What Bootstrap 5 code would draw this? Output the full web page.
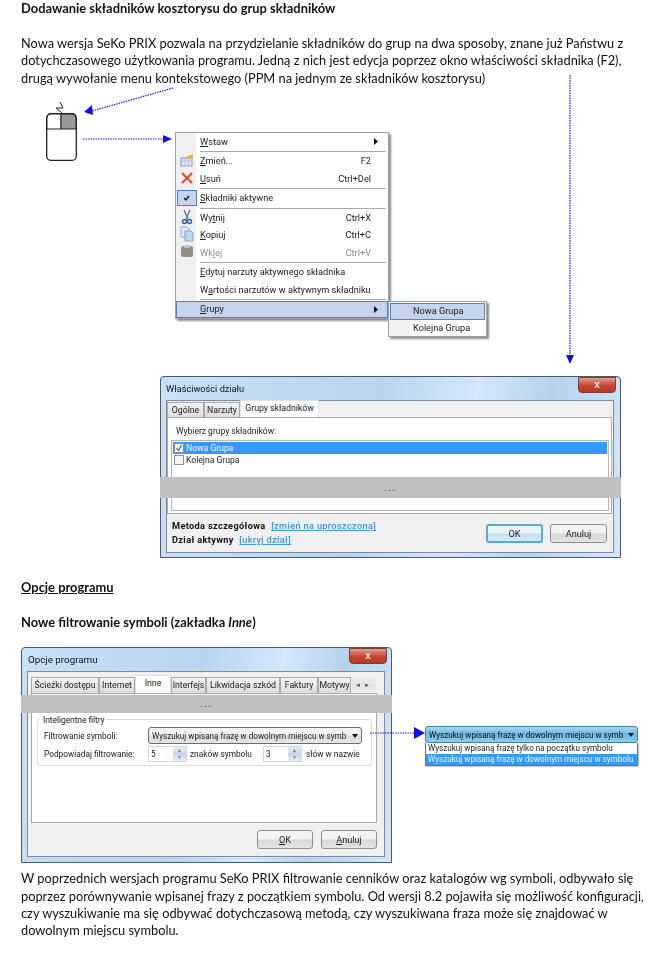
<!DOCTYPE html>
<html lang="pl"><head><meta charset="utf-8"><title>SeKo PRIX</title>
<link href="https://cdn.jsdelivr.net/npm/bootstrap@5.3.0/dist/css/bootstrap.min.css" rel="stylesheet">
<style>
html,body{margin:0;background:#fff}
.sheet{position:relative;width:668px;height:960px;overflow:hidden;padding-left:21px;font-family:Lato,"Liberation Sans",sans-serif;font-size:12.8px;line-height:17.4px;color:#111;filter:blur(.3px)}
.sheet p,.sheet h2{margin:0}
.hd{font-size:12.9px;font-weight:700;line-height:17px;color:#111}
.para-a{margin-top:18px!important;width:620px}
.para-b{margin-top:7px!important;width:640px}
.arrows{position:absolute;left:0;top:0;pointer-events:none}
.ui{font-family:Roboto,"Liberation Sans",sans-serif;font-size:9.2px;line-height:12px;color:#222;white-space:nowrap}
.fig-a{margin-left:25px;padding-top:26px;height:289px;gap:98px}
.mouse{width:31px;height:48px;flex:none;display:block}
.ctx{position:relative;width:214px;height:187px;margin-top:19px;flex:none;background:linear-gradient(90deg,#f0f0f0 20px,#fff 20px);border:1px solid #a0a0a0;box-shadow:2px 2px 2px #8a8a8a}
.mi{height:17.5px;padding-left:24px;padding-right:17px}
.mi u{text-decoration-thickness:1px;text-underline-offset:1px}
.mi.off{color:#8d8d8d}
.mi.cur{background:#c5d3ee;outline:1px solid #4f82c8;outline-offset:-1px}
.ar{margin-left:auto;margin-right:-7px}
.mic{position:absolute;left:3px;width:16px;height:16px}
.sepl{height:1px;background:#a8a8a8;margin:.5px 2px .5px 24px}
.sub{position:absolute;left:212px;top:168px;width:99px;height:36px;background:linear-gradient(90deg,#f0f0f0 21px,#fff 21px);border:1px solid #a0a0a0;box-shadow:2px 2px 2px #8a8a8a;padding:1px}
.sub .mi{padding-left:23px;height:16.5px}
.tick{position:absolute;left:1px;top:57px;width:20px;height:16px;background:#c5d3ee;border:1px solid #4f82c8}
.win{position:relative;flex:none;background:linear-gradient(100deg,#c9e0f7 0,#b7d5f1 45%,#d4e7fb 65%,#b5d3ee 80%,#d3e7fc 100%);border:1px solid #4c5a66;border-radius:4px 4px 0 0;padding:0 6px 5px 5px}
.w1{margin-left:139px;width:461px;height:182px}
.w2{width:371px;height:216px;font-size:8.3px}
.tbar{height:23px;color:#111}
.w2 .tbar{font-size:9.8px;padding-left:1px}
.xbtn{position:absolute;right:4px;top:0;width:38px;height:16px;border-radius:0 0 4px 4px;background:linear-gradient(180deg,#e0a193,#c9422f 55%,#b13a2c);border:1px solid #7f3a33;color:#f2f2f2;font:700 10px/13px "Liberation Sans",sans-serif;text-align:center}
.client{background:#f0f0f0;border:1px solid #7f8d9b}
.w1 .client{height:153px;padding:0 1px 0 0}
.w2 .client{height:186px;padding:4px 7px 0 3px}
.tabsx{border:0;flex-wrap:nowrap;height:16px;gap:0}
.w2 .tabsx{height:17px}
.tabsx .nav-link{height:15px;margin-top:1px;padding:0;text-align:center;font-size:8.7px;line-height:14px;color:#222;background:linear-gradient(#f4f4f4,#dcdcdc);border:1px solid #a9a9a9;border-bottom:0;border-radius:0;white-space:nowrap}
.w2 .tabsx .nav-link{height:16px;line-height:15px}
.tabsx .nav-link.active{height:17px;margin-top:-1px;background:#fff;color:#222;position:relative;z-index:1}
.w2 .tabsx .nav-link.active{height:18px;margin-top:-1px}
.pane{background:#fff;border:1px solid #a9a9a9}
.w1 .pane{height:97px;padding:7px 2px 0 3px;font-size:8.5px}
.w2 .pane{height:130px;padding:25px 4px 0 5px}
.lbl-a{padding-left:5px;margin-bottom:3px!important}
.lst{border:1px solid #b5b5b5;height:71px;border-radius:0;overflow:hidden;padding:1px}
.lst .list-group-item{border:0;padding:0;background:transparent;color:#222;font-size:8.6px;line-height:12px;height:12px;border-radius:0}
.lst .list-group-item.active{background:#3399ff;color:#e9f3ff}
.cb{display:inline-block;width:10px;height:10px;border:1px solid #8e8f8f;background:#f3f3f3;margin:0 2px 0 1px;vertical-align:-2px;position:relative}
.cb svg{position:absolute;left:0;top:0}
.band{position:absolute;left:-1px;right:-1px;background:#c0c0c0;text-align:center;color:#444;font:700 8px/10px "Liberation Sans",sans-serif;letter-spacing:2px}
.w1 .band{top:100px;height:21px;padding-top:7px}
.w2 .band{top:47px;height:18px;padding-top:5px}
.foot-a{height:37px;padding:5px 5px 0 5px}
.b-txt{font-weight:700;letter-spacing:.35px;color:#111;line-height:14px;font-size:9.2px}
.b-txt span{color:#3a94e8;margin-left:3px;font-weight:500;text-decoration:underline}
.btn-box{gap:7px;padding-top:5px}
.bt{width:57px;height:19px;padding:0;font:9.2px/17px Roboto,"Liberation Sans",sans-serif;color:#222;background:linear-gradient(#f3f3f3 48%,#d8d8d8 52%,#e4e4e4);border:1px solid #8d8d8d;border-radius:3px}
.bt.def{background:linear-gradient(#eaf6fb 48%,#c7e2ef 52%,#d4ebf5);border:2px solid #58a9d3;line-height:15px}
.grp{position:relative;height:47px;border:1px solid #dcdcdc;border-radius:3px;padding:7px 5px 0 6px}
.grp .lgd{position:absolute;left:4px;top:-6px;background:#fff;padding:0 1px}
.rw{height:17px;margin-bottom:1px}
.lb{width:104px;flex:none}
.cmb{height:17px;padding:0 3px 0 3px;font-size:8.15px;border:1px solid #6b6b6b;border-radius:3px;background:linear-gradient(#f3f3f3 48%,#dcdcdc 52%,#e5e5e5);width:214px;flex:none}
.caret-d{width:0;height:0;border:3.5px solid transparent;border-top:4px solid #111;border-bottom:0;flex:none;margin-left:auto}
.spin{width:39px;height:16px;flex:none;border:1px solid #d4d4d4;padding-left:2px}
.spin .sb{margin-left:auto;width:13px;height:14px;background:linear-gradient(#e8f0f8,#c4d6e8 50%,#e8f0f8);color:#6a7f95;font-size:5px;line-height:7px;text-align:center}
.sp-t{width:76px;padding-left:3px;flex:none}
.zb{width:24px;height:13px;font-size:6px;line-height:13px;background:#e6e6e6;color:#456;letter-spacing:3px;flex:none;text-align:center;margin-top:2px;margin-left:1px}
.foot-b{padding:7px 0 0 0;gap:8px}
.foot-b .bt{width:56px}
.w2-row{margin-top:16px;height:216px}
.rt{position:absolute;left:404px;top:79px;width:213px;font-size:8.15px}
.rt .cmb{background:linear-gradient(#a9d8f1,#6ab8e3 50%,#8ecdf0);border-color:#3b7ea6;height:17px;width:213px;color:#111}
.drop{border:1px solid #707070;border-top:0;background:#fff;height:23px;box-shadow:1px 1px 1px #ccc;padding-left:2px}
.drop div{height:11px;line-height:11px}
.drop .sel{background:#3399ff;color:#eaf4ff;margin-left:-2px;padding-left:2px}
.sec{margin-top:21px!important;text-decoration:underline}
.sec2{margin-top:18px!important}
</style></head><body>
<div class="sheet">
<h2 class="hd">Dodawanie składników kosztorysu do grup składników</h2>
<p class="para-a">Nowa wersja SeKo PRIX pozwala na przydzielanie składników do grup na dwa sposoby, znane już Państwu z dotychczasowego użytkowania programu. Jedną z nich jest edycja poprzez okno właściwości składnika (F2), drugą wywołanie menu kontekstowego (PPM na jednym ze składników kosztorysu)</p>

<div class="fig-a d-flex align-items-start ui">
 <svg class="mouse" viewBox="0 0 31 48"><rect x=".7" y=".7" width="29.6" height="46.6" rx="4" fill="#fff" stroke="#222" stroke-width="1.3"/><path d="M1 5a4 4 0 0 1 4-4h10v15H1z" fill="#fff" stroke="#222" stroke-width="1"/><path d="M15 1h11a4 4 0 0 1 4 4v11H15z" fill="#999" stroke="#222" stroke-width="1"/></svg>
 <div class="ctx">
  <div class="mi d-flex justify-content-between align-items-center"><span><u>W</u>staw</span><svg width="4" height="7" viewBox="0 0 4 7" class="ar"><path d="M0 0l4 3.5L0 7z" fill="#111"/></svg></div>
  <div class="sepl"></div>
  <div class="mi d-flex justify-content-between align-items-center"><span><u>Z</u>mień...</span><span>F2</span></div>
  <svg class="mic" style="top:19px" viewBox="0 0 16 16"><rect x="2" y="6" width="11" height="8" fill="#dfe7f2" stroke="#8c9bb0"/><path d="M2 9h11M6 6v8M9.500 6v8" stroke="#a9b6c8" stroke-width=".7"/><path d="M6 5l8-3v4H6z" fill="#e8b93c"/></svg>
  <div class="mi d-flex justify-content-between align-items-center"><span><u>U</u>suń</span><span>Ctrl+Del</span></div>
  <svg class="mic" style="top:37px" viewBox="0 0 16 16"><path d="M3 3l10 10M13 3L3 13" stroke="#e0492f" stroke-width="2.2"/></svg>
  <div class="sepl"></div>
  <div class="tick"><svg class="d-block" width="18" height="14" viewBox="0 0 18 14"><path d="M6 7l2 2 3-4" fill="none" stroke="#111" stroke-width="1.3"/></svg></div>
  <div class="mi d-flex align-items-center"><span><u>S</u>kładniki aktywne</span></div>
  <div class="sepl"></div>
  <div class="mi d-flex justify-content-between align-items-center"><span>Wy<u>t</u>nij</span><span>Ctrl+X</span></div>
  <svg class="mic" style="top:76px" viewBox="0 0 16 16"><path d="M5 1l4 9M11 1L7 10" stroke="#6f7f92" stroke-width="1.5"/><circle cx="5.500" cy="12.500" r="2" fill="none" stroke="#2d5fa8" stroke-width="1.4"/><circle cx="10.500" cy="12.500" r="2" fill="none" stroke="#2d5fa8" stroke-width="1.4"/></svg>
  <div class="mi d-flex justify-content-between align-items-center"><span><u>K</u>opiuj</span><span>Ctrl+C</span></div>
  <svg class="mic" style="top:93px" viewBox="0 0 16 16"><path d="M2 1h6l2 2v8H2z" fill="#e6eef8" stroke="#92abca"/><path d="M6 5h6l2 2v8H6z" fill="#bcd4ee" stroke="#7fa2cc"/></svg>
  <div class="mi off d-flex justify-content-between align-items-center"><span>Wk<u>l</u>ej</span><span>Ctrl+V</span></div>
  <svg class="mic" style="top:110px" viewBox="0 0 16 16"><rect x="2" y="3" width="12" height="11" rx="2" fill="#8f8f8f"/><rect x="5" y="2" width="6" height="3" rx="1" fill="#c5c5c5"/></svg>
  <div class="sepl"></div>
  <div class="mi d-flex align-items-center"><span><u>E</u>dytuj narzuty aktywnego składnika</span></div>
  <div class="mi d-flex align-items-center"><span>W<u>a</u>rtości narzutów w aktywnym składniku</span></div>
  <div class="sepl"></div>
  <div class="mi cur d-flex justify-content-between align-items-center"><span><u>G</u>rupy</span><svg width="4" height="7" viewBox="0 0 4 7" class="ar"><path d="M0 0l4 3.5L0 7z" fill="#111"/></svg></div>
  <div class="sub"><div class="mi cur d-flex align-items-center"><span>Nowa Grupa</span></div><div class="mi d-flex align-items-center"><span>Kolejna Grupa</span></div></div>
 </div>
</div>

<div class="win w1 ui">
 <div class="tbar d-flex align-items-center">Właściwości działu</div>
 <div class="xbtn">x</div>
 <div class="client">
  <ul class="nav nav-tabs tabsx">
   <li class="nav-item"><a class="nav-link" style="width:37px">Ogólne</a></li>
   <li class="nav-item"><a class="nav-link" style="width:36px">Narzuty</a></li>
   <li class="nav-item"><a class="nav-link active" style="width:79px">Grupy składników</a></li>
  </ul>
  <div class="pane">
   <p class="lbl-a">Wybierz grupy składników:</p>
   <ul class="list-group lst">
    <li class="list-group-item active"><span class="cb"><svg width="8" height="8" viewBox="0 0 8 8"><path d="M1.500 4l2 2.500L6.500 1" fill="none" stroke="#4a6a9a" stroke-width="1.2"/></svg></span>Nowa Grupa</li>
    <li class="list-group-item"><span class="cb"></span>Kolejna Grupa</li>
   </ul>
  </div>
  <div class="foot-a d-flex justify-content-between">
   <div class="b-txt"><div>Metoda szczegółowa <span>[zmień na uproszczoną]</span></div><div>Dział aktywny <span>[ukryj dział]</span></div></div>
   <div class="d-flex btn-box"><button class="btn bt def">OK</button><button class="btn bt">Anuluj</button></div>
  </div>
 </div>
 <div class="band">...</div>
</div>

<h2 class="hd sec">Opcje programu</h2>
<h2 class="hd sec2">Nowe filtrowanie symboli (zakładka <em>Inne</em>)</h2>

<div class="w2-row position-relative ui">
 <div class="win w2">
  <div class="tbar d-flex align-items-center">Opcje programu</div>
  <div class="xbtn">x</div>
  <div class="client">
   <ul class="nav nav-tabs tabsx">
    <li class="nav-item"><a class="nav-link" style="width:68px">Ścieżki dostępu</a></li>
    <li class="nav-item"><a class="nav-link" style="width:36px">Internet</a></li>
    <li class="nav-item"><a class="nav-link active" style="width:36px">Inne</a></li>
    <li class="nav-item"><a class="nav-link" style="width:35px">Interfejs</a></li>
    <li class="nav-item"><a class="nav-link" style="width:74px">Likwidacja szkód</a></li>
    <li class="nav-item"><a class="nav-link" style="width:38px">Faktury</a></li>
    <li class="nav-item"><a class="nav-link" style="width:33px">Motywy</a></li>
    <li class="zb">◄►</li>
   </ul>
   <div class="pane">
    <div class="grp">
     <div class="lgd">Inteligentne filtry</div>
     <div class="rw d-flex align-items-center"><span class="lb">Filtrowanie symboli:</span><div class="cmb d-flex align-items-center"><span>Wyszukuj wpisaną frazę w dowolnym miejscu w symb</span><i class="caret-d"></i></div></div>
     <div class="rw d-flex align-items-center"><span class="lb">Podpowiadaj filtrowanie:</span><div class="spin d-flex align-items-center">5<div class="sb">▲<br>▼</div></div><span class="sp-t">znaków symbolu</span><div class="spin d-flex align-items-center">3<div class="sb">▲<br>▼</div></div><span class="ps-1">słów w nazwie</span></div>
    </div>
   </div>
   <div class="foot-b d-flex justify-content-end"><button class="btn bt"><u>O</u>K</button><button class="btn bt"><u>A</u>nuluj</button></div>
  </div>
  <div class="band">...</div>
 </div>
 <div class="rt">
  <div class="cmb d-flex align-items-center"><span>Wyszukuj wpisaną frazę w dowolnym miejscu w symb</span><i class="caret-d"></i></div>
  <div class="drop"><div>Wyszukuj wpisaną frazę tylko na początku symbolu</div><div class="sel">Wyszukuj wpisaną frazę w dowolnym miejscu w symbolu</div></div>
 </div>
</div>

<p class="para-b">W poprzednich wersjach programu SeKo PRIX filtrowanie cenników oraz katalogów wg symboli, odbywało się poprzez porównywanie wpisanej frazy z początkiem symbolu. Od wersji 8.2 pojawiła się możliwość konfiguracji, czy wyszukiwanie ma się odbywać dotychczasową metodą, czy wyszukiwana fraza może się znajdować w dowolnym miejscu symbolu.</p>

<svg class="arrows" width="668" height="960" viewBox="0 0 668 960">
 <g stroke="#1a1ae6" stroke-width="1.2" stroke-dasharray="1.5 1" fill="none"><path d="M173 88L92 111M83 139H163M570 75V355M370 733H415"/></g>
 <g fill="#1010e0"><path d="M84 112L92 105L93 115z"/><path d="M172 139L163 135V143z"/><path d="M570 364L566 355H574z"/><path d="M425 733L414 727V739z"/></g>
 <path d="M60 102L63 108L56 108L62 113" fill="none" stroke="#222" stroke-width="1"/>
</svg>
</div>
<script src="https://cdn.jsdelivr.net/npm/bootstrap@5.3.0/dist/js/bootstrap.bundle.min.js"></script>
</body></html>
